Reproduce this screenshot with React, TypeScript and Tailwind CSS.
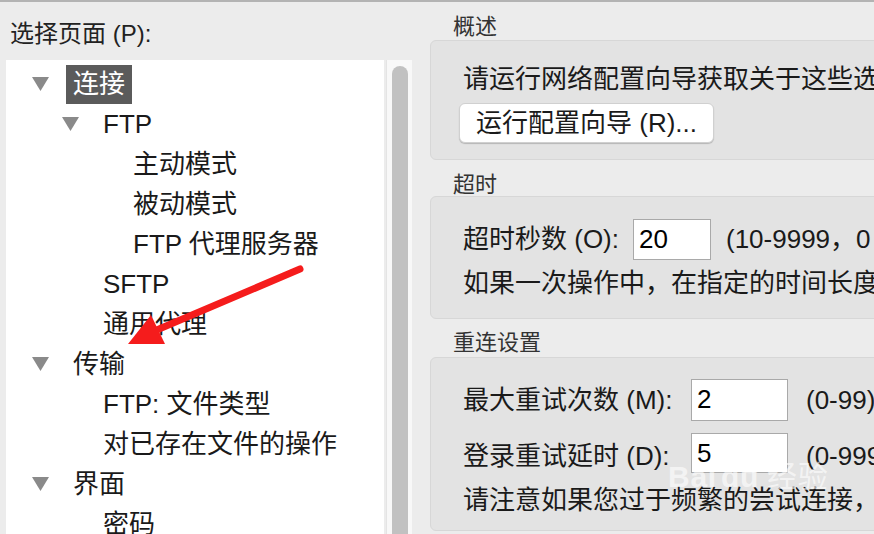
import React from "react";

const font = { fontFamily: '"Liberation Sans", "Noto Sans CJK SC", sans-serif' };

type Node = { label: string; level: number; open?: boolean; selected?: boolean };

const tree: Node[] = [
  { label: "连接", level: 0, open: true, selected: true },
  { label: "FTP", level: 1, open: true },
  { label: "主动模式", level: 2 },
  { label: "被动模式", level: 2 },
  { label: "FTP 代理服务器", level: 2 },
  { label: "SFTP", level: 1 },
  { label: "通用代理", level: 1 },
  { label: "传输", level: 0, open: true },
  { label: "FTP: 文件类型", level: 1 },
  { label: "对已存在文件的操作", level: 1 },
  { label: "界面", level: 0, open: true },
  { label: "密码", level: 1 },
];

const indent = ["pl-[26px]", "pl-[56px]", "pl-[86px]"];

function Triangle() {
  return (
    <svg width="17" height="14" viewBox="0 0 17 14" className="shrink-0">
      <polygon points="0,0 17,0 8.5,14" fill="#8a8a8a" />
    </svg>
  );
}

function TreeRow({ node }: { node: Node }) {
  return (
    <div className={`h-10 shrink-0 flex items-center ${indent[node.level]}`}>
      <div className="w-[17px] shrink-0">{node.open && <Triangle />}</div>
      <span
        className={`ml-[17px] px-[7px] h-[39px] leading-[39px] whitespace-nowrap ${
          node.selected ? "bg-[#5b5b5b] text-white" : "text-[#1a1a1a]"
        }`}
      >
        {node.label}
      </span>
    </div>
  );
}

function GroupLabel({ children, pt }: { children: React.ReactNode; pt: string }) {
  return (
    <div className={`${pt} pl-[23px] text-[22px] leading-[22px] text-[#333]`}>{children}</div>
  );
}

function Field({ value, w }: { value: string; w: string }) {
  return (
    <div className={`${w} shrink-0 self-stretch bg-white border border-[#a9a9a9] pl-[5px] text-[26px] leading-[38px] text-black`}>
      {value}
    </div>
  );
}

export default function App() {
  return (
    <div
      style={font}
      className="relative w-[874px] h-[534px] overflow-hidden bg-[#ececec] border-t-2 border-[#b3b3b3] flex text-[26px] text-[#1a1a1a]"
    >
      {/* left: page tree */}
      <div className="w-[430px] shrink-0 flex flex-col min-h-0">
        <div className="h-[58px] shrink-0 pl-[10px] pt-[16px] text-[24px] leading-[32px] text-[#222]">
          选择页面 (P):
        </div>
        <div className="flex flex-1 min-h-0 overflow-hidden">
          <div className="ml-[6px] w-[378px] bg-white pt-1 overflow-hidden">
            {tree.map((n) => (
              <TreeRow key={n.label} node={n} />
            ))}
          </div>
          <div className="ml-[2px] w-[26px] bg-[#f8f8f8] border-l border-[#e4e4e4] pl-[5px] pt-[6px]">
            <div className="w-4 h-full rounded-t-full bg-[#c1c1c1]" />
          </div>
        </div>
      </div>

      {/* right: settings */}
      <div className="w-[470px] shrink-0 flex flex-col">
        <div className="h-[38px] shrink-0">
          <GroupLabel pt="pt-[14px]">概述</GroupLabel>
        </div>
        <div className="h-[120px] shrink-0 rounded-[6px] bg-[#e3e3e3] border border-[#d7d7d7] pl-[32px] pt-[23px]">
          <div className="leading-[30px] whitespace-nowrap">请运行网络配置向导获取关于这些选项的信息</div>
          <button className="mt-[9px] -ml-[4px] h-10 px-4 bg-white rounded-[6px] border border-[#d0d0d0] shadow-[0_1px_1px_rgba(0,0,0,0.2)] leading-[38px] text-[#1a1a1a]">
            运行配置向导 (R)...
          </button>
        </div>

        <div className="h-[36px] shrink-0">
          <GroupLabel pt="pt-[14px]">超时</GroupLabel>
        </div>
        <div className="h-[123px] shrink-0 rounded-[6px] bg-[#e3e3e3] border border-[#d7d7d7] pl-[32px] pt-[22px]">
          <div className="flex items-center h-[41px] whitespace-nowrap">
            <span className="w-[170px] shrink-0">超时秒数 (O):</span>
            <Field value="20" w="w-[78px]" />
            <span className="ml-[15px]">(10-9999，0 表示禁用)</span>
          </div>
          <div className="mt-[8px] leading-[30px] whitespace-nowrap">如果一次操作中，在指定的时间长度内没有数据传输</div>
        </div>

        <div className="h-[38px] shrink-0">
          <GroupLabel pt="pt-[13px]">重连设置</GroupLabel>
        </div>
        <div className="h-[174px] shrink-0 rounded-[6px] bg-[#e3e3e3] border border-[#d7d7d7] pl-[32px] pt-[21px]">
          <div className="flex items-center h-[42px] whitespace-nowrap">
            <span className="w-[228px] shrink-0">最大重试次数 (M):</span>
            <Field value="2" w="w-[97px]" />
            <span className="ml-[18px]">(0-99)</span>
          </div>
          <div className="mt-3 flex items-center h-[40px] whitespace-nowrap">
            <span className="w-[228px] shrink-0 pt-[6px]">登录重试延时 (D):</span>
            <Field value="5" w="w-[97px]" />
            <span className="ml-[18px] pt-[6px]">(0-999 秒)</span>
          </div>
          <div className="mt-3 leading-[30px] whitespace-nowrap">请注意如果您过于频繁的尝试连接，</div>
        </div>
      </div>

      {/* watermark */}
      <svg className="absolute left-[728px] top-[438px] pointer-events-none" width="44" height="34" viewBox="0 0 44 34">
        <g fill="none" stroke="#ffffff" strokeOpacity="0.75" strokeWidth="2">
          <ellipse cx="9" cy="14" rx="4" ry="5" />
          <ellipse cx="17" cy="6" rx="4" ry="5" />
          <ellipse cx="27" cy="6" rx="4" ry="5" />
          <ellipse cx="35" cy="14" rx="4" ry="5" />
          <path d="M12 30 C12 22 17 18 22 18 C27 18 32 22 32 30 C28 33 16 33 12 30 Z" />
        </g>
      </svg>
      <div className="absolute left-[668px] top-[460px] pointer-events-none text-white/60 font-bold text-[30px] leading-[30px] tracking-wide">
        Bai<span className="ml-1">du</span>
        <span className="ml-2 font-normal">经验</span>
      </div>

      {/* red annotation arrow */}
      <svg className="absolute inset-0 pointer-events-none" width="874" height="534">
        <line x1="300" y1="267" x2="152" y2="330" stroke="#f51c1c" strokeWidth="7" strokeLinecap="round" />
        <polygon points="128,342 151,313 165,342" fill="#f51c1c" />
      </svg>
    </div>
  );
}
